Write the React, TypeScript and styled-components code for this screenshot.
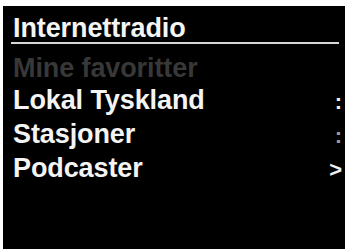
import React from "react";
import styled, { createGlobalStyle } from "styled-components";

const Global = createGlobalStyle`
  html, body { margin: 0; padding: 0; background: #ffffff; }
  body { font-family: "Liberation Sans", Arial, sans-serif; }
`;

const Screen = styled.div`
  margin: 6px 0 0 3px;
  height: 243px;
  background: #000;
  padding: 8px 3px 0 8px;
  box-sizing: border-box;
  overflow: hidden;
  font-family: "Liberation Sans", Arial, Helvetica, sans-serif;
  font-weight: 700;
  font-size: 27px;
  letter-spacing: -0.1px;
`;

const Title = styled.div`
  color: #f4f4f4;
  line-height: 28px;
  padding-left: 2px;
  margin-right: 3px;
  border-bottom: 2px solid #d8d8d8;
`;

const List = styled.div`
  margin-top: 8px;
  display: flex;
  flex-direction: column;
`;

const Row = styled.div<{ $dim?: boolean }>`
  display: flex;
  justify-content: space-between;
  align-items: baseline;
  line-height: 32px;
  padding-left: 2px;
  color: ${(p) => (p.$dim ? "#383838" : "#f4f4f4")};
`;

const Mark = styled.span<{ $faint?: boolean }>`
  color: ${(p) => (p.$faint ? "#9a9a9a" : "#f0f0f0")};
  font-size: 22px;
  letter-spacing: 0;
`;

export default function App() {
  return (
    <>
      <Global />
      <Screen>
        <Title>Internettradio</Title>
        <List>
          <Row $dim>Mine favoritter</Row>
          <Row>
            <span>Lokal Tyskland</span>
            <Mark>:</Mark>
          </Row>
          <Row>
            <span>Stasjoner</span>
            <Mark $faint>:</Mark>
          </Row>
          <Row>
            <span>Podcaster</span>
            <Mark>&gt;</Mark>
          </Row>
        </List>
      </Screen>
    </>
  );
}
